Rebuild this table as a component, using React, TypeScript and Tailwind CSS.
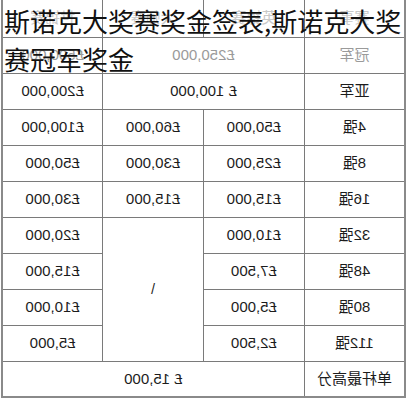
const cellFont = { fontFamily: '"Liberation Sans", "Noto Sans CJK SC", sans-serif' };

type Row = { label: string; uk?: string; masters?: string; world?: string };

// the source picture is the table flipped left to right, so it is laid out
// in its original order here and mirrored as a whole
const rows: Row[] = [
  { label: '4强', uk: '£50,000', masters: '£60,000', world: '£100,000' },
  { label: '8强', uk: '£25,000', masters: '£30,000', world: '£50,000' },
  { label: '16强', uk: '£15,000', masters: '£15,000', world: '£30,000' },
  { label: '32强', uk: '£10,000', world: '£20,000' },
  { label: '48强', uk: '£7,500', world: '£15,000' },
  { label: '80强', uk: '£5,000', world: '£10,000' },
  { label: '112强', uk: '£2,500', world: '£5,000' },
];

const td = 'border border-[#7a7a7a] text-center align-middle p-0';

export default function App() {
  return (
    <div className="relative h-[400px] w-[407px] overflow-hidden bg-white">
      <div className="ml-[1px] w-[405px] -scale-x-100">
        <table
          className="w-full table-fixed border-collapse border-x-2 border-b-2 border-[#8a8a8a] text-[15px] text-[#1c1c1c]"
          style={cellFont}
        >
          <tbody>
            <tr className="h-[37px] text-[#c8c8c8]">
              <td className={`${td} border-t-0`}>赛事</td>
              <td className={`${td} border-t-0`}>英锦赛</td>
              <td className={`${td} border-t-0`}>大师赛</td>
              <td className={`${td} border-t-0`}>世锦赛</td>
            </tr>
            <tr className="h-[36px] text-[#9a9a9a]">
              <td className={td}>冠军</td>
              <td className={td} colSpan={2}>£250,000</td>
              <td className={td}>£500,000</td>
            </tr>
            <tr className="h-[36px]">
              <td className={td}>亚军</td>
              <td className={td} colSpan={2}>£ 100,000</td>
              <td className={td}>£200,000</td>
            </tr>
            {rows.map((r, idx) => (
              <tr key={r.label} className="h-[36px]">
                <td className={td}>{r.label}</td>
                <td className={td}>{r.uk}</td>
                {r.masters ? (
                  <td className={td}>{r.masters}</td>
                ) : idx === 3 ? (
                  <td className={`${td} text-[14px]`} rowSpan={4}>
                    {'\\'}
                  </td>
                ) : null}
                <td className={td}>{r.world}</td>
              </tr>
            ))}
            <tr className="h-[36px]">
              <td className={td}>单杆最高分</td>
              <td className={td} colSpan={3}>£ 15,000</td>
            </tr>
          </tbody>
        </table>
      </div>

      <div
        className="absolute left-[4px] top-[2px] text-[26px] leading-[38px] text-[#111]"
        style={{ fontFamily: '"Noto Sans CJK SC", sans-serif' }}
      >
        <span className="block whitespace-nowrap">斯诺克大奖赛奖金签表,斯诺克大奖</span>
        <span className="block whitespace-nowrap">赛冠军奖金</span>
      </div>
    </div>
  );
}
